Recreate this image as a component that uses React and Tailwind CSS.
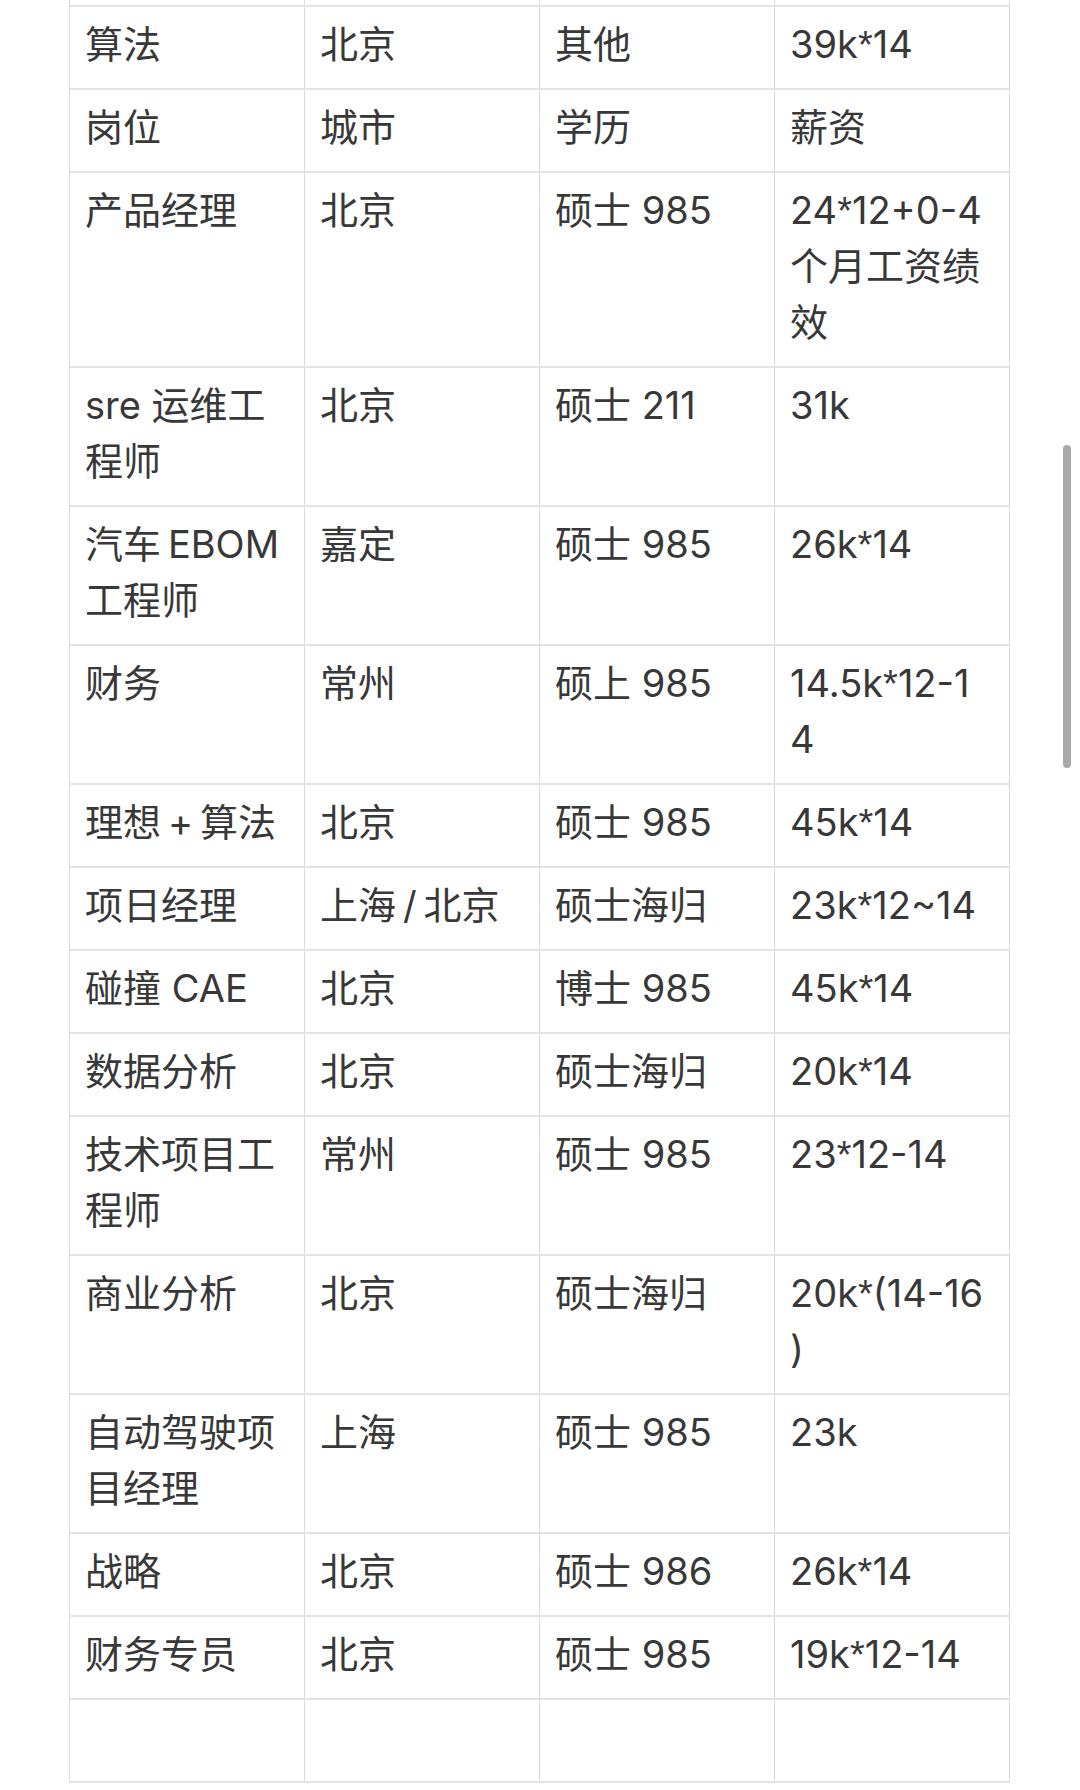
import React from "react";

// salary table rows, each cell is a list of the lines as they wrap in the screenshot
const rows = [
  [["算法"], ["北京"], ["其他"], ["39k*14"]],
  [["岗位"], ["城市"], ["学历"], ["薪资"]],
  [["产品经理"], ["北京"], ["硕士 985"], ["24*12+0-4", "个月工资绩", "效"]],
  [["sre 运维工", "程师"], ["北京"], ["硕士 211"], ["31k"]],
  [["汽车\u2009EBOM", "工程师"], ["嘉定"], ["硕士 985"], ["26k*14"]],
  [["财务"], ["常州"], ["硕上 985"], ["14.5k*12-1", "4"]],
  [["理想\u2009+\u2009算法"], ["北京"], ["硕士 985"], ["45k*14"]],
  [["项日经理"], ["上海\u2009/\u2009北京"], ["硕士海归"], ["23k*12~14"]],
  [["碰撞 CAE"], ["北京"], ["博士 985"], ["45k*14"]],
  [["数据分析"], ["北京"], ["硕士海归"], ["20k*14"]],
  [["技术项目工", "程师"], ["常州"], ["硕士 985"], ["23*12-14"]],
  [["商业分析"], ["北京"], ["硕士海归"], ["20k*(14-16", ")"]],
  [["自动驾驶项", "目经理"], ["上海"], ["硕士 985"], ["23k"]],
  [["战略"], ["北京"], ["硕士 986"], ["26k*14"]],
  [["财务专员"], ["北京"], ["硕士 985"], ["19k*12-14"]],
  [[""], [""], [""], [""]],
];

// the asterisk in the screenshot sits high, like Arial's
function Line({ text }) {
  const parts = text.split("*");
  return (
    <div className="h-[56px] leading-[56px] whitespace-nowrap">
      {parts.map((p, i) => (
        <React.Fragment key={i}>
          {i > 0 && <span className="font-['Liberation_Sans']">*</span>}
          {p}
        </React.Fragment>
      ))}
    </div>
  );
}

function Cell({ lines }) {
  return (
    <div className="border-r border-[#dadada] pl-[15px] pr-[8px] pt-[9px] pb-[16px]">
      {lines.map((line, i) => (
        <Line key={i} text={line} />
      ))}
    </div>
  );
}

export default function App() {
  return (
    <div
      className="relative h-[1790px] overflow-hidden bg-white text-[38px] text-[#383838]"
      style={{ fontFamily: 'Inter, "Noto Sans CJK SC", sans-serif' }}
    >
      <div className="ml-[69px] w-[941px] border-l border-[#dadada]">
        {/* tail of the row above, cut off by the top edge */}
        <div className="grid grid-cols-4 border-b-2 border-[#e3e3e3]">
          {[0, 1, 2, 3].map((i) => (
            <div key={i} className="h-[5px] border-r border-[#dadada]"></div>
          ))}
        </div>

        {rows.map((row, r) => (
          <div key={r} className="grid grid-cols-4 border-b-2 border-[#e3e3e3]">
            {row.map((lines, c) => (
              <Cell key={c} lines={lines} />
            ))}
          </div>
        ))}
      </div>

      {/* scrollbar thumb */}
      <div className="absolute left-[1063px] top-[445px] h-[323px] w-[8px] rounded-full bg-[#a9a9a9]"></div>
    </div>
  );
}
